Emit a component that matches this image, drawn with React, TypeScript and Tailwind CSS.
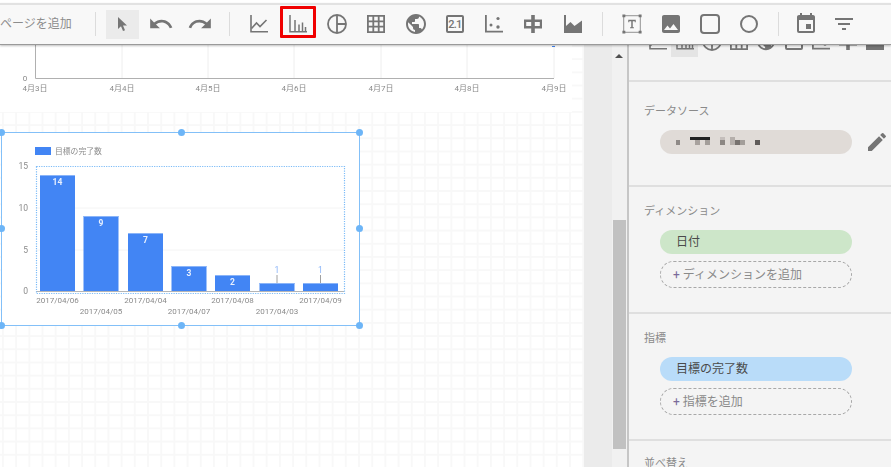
import { MdEdit, MdEvent, MdFilterList, MdImage, MdPublic, MdRedo, MdUndo } from "react-icons/md";

const GREY = "#757575";
const FONT = "font-['Roboto','Noto_Sans_CJK_JP',sans-serif]";

function CursorIcon() {
  return (
    <svg width="9" height="14" viewBox="0 0 9 14" fill={GREY}>
      <path d="M0 0v12l3-2.800 2 4.800 2-.8-2-4.600h4z" />
    </svg>
  );
}

function LineChartIcon() {
  return (
    <svg width="18" height="18" viewBox="0 0 18 18" fill="none" stroke={GREY} strokeWidth="1.600">
      <path d="M1 0v16.700h17" />
      <path d="M1.500 13.500L6.500 8l3.500 3.500 6.500-6.500" />
    </svg>
  );
}

function BarChartIcon() {
  return (
    <svg width="18" height="18" viewBox="0 0 18 18" fill="none" stroke={GREY} strokeWidth="1.500">
      <path d="M1 0v16.700h17" />
      <path d="M6 5v11M10 9.500V16M13.500 7.500V16M16.500 12v4" />
    </svg>
  );
}

function PieIcon() {
  return (
    <svg width="20" height="20" viewBox="0 0 20 20" fill="none" stroke={GREY} strokeWidth="1.800">
      <circle cx="10" cy="10" r="9" />
      <path d="M10 1v18M10 10h9" />
    </svg>
  );
}

function TableIcon() {
  return (
    <svg width="18" height="18" viewBox="0 0 18 18" fill="none" stroke={GREY} strokeWidth="1.800">
      <path d="M.9.9h16.200v16.200H.9zM6.300.9v16.200M11.700.9v16.200M.9 6.300h16.200M.9 11.700h16.200" />
    </svg>
  );
}

function ScorecardIcon() {
  return (
    <div className="flex h-[18px] w-[18px] items-center justify-center rounded-[2px] border-2 border-[#757575]">
      <span className="text-[11px] font-medium leading-none tracking-[-0.8px] text-[#757575]">2.1</span>
    </div>
  );
}

function ScatterIcon() {
  return (
    <svg width="18" height="18" viewBox="0 0 18 18" fill={GREY}>
      <path d="M0 0h1.800v15.800H18v1.700H0z" />
      <circle cx="13" cy="3.500" r="1.600" />
      <circle cx="6" cy="10" r="1.500" />
      <circle cx="13" cy="12" r="1.700" />
    </svg>
  );
}

function BulletIcon() {
  return (
    <svg width="18" height="18" viewBox="0 0 18 18" fill={GREY} fillRule="evenodd">
      <path d="M7.200 0h3.600v4.500H18v9h-7.200V18H7.200v-4.500H0v-9h7.200zM2.200 7v4h5V7zm8.600 0v4h5V7z" />
    </svg>
  );
}

function AreaIcon() {
  return (
    <svg width="18" height="18" viewBox="0 0 18 18" fill={GREY}>
      <path d="M0 0h2v11l4.500-4 4 4L18 5.500V18H0z" />
    </svg>
  );
}

function TextBoxIcon() {
  return (
    <svg width="20" height="20" viewBox="0 0 24 24" fill="none">
      <rect x="2" y="2" width="20" height="20" stroke="#a0a0a0" strokeWidth="1.400" />
      <path d="M7.500 7h9v3h-1.200V8.600h-2.400v7.200h1.400V17H9.700v-1.200h1.400V8.600H8.700V10H7.500z" fill={GREY} />
      <path d="M.5.500h3.500V4H.5zM20 .5h3.500V4H20zM.5 20h3.500v3.500H.5zM20 20h3.500v3.500H20z" fill={GREY} />
    </svg>
  );
}

function SquareIcon() {
  return (
    <svg width="20" height="20" viewBox="0 0 20 20" fill="none" stroke={GREY} strokeWidth="2">
      <rect x="1" y="1" width="18" height="18" rx="3" />
    </svg>
  );
}

function CircleIcon() {
  return (
    <svg width="18" height="18" viewBox="0 0 18 18" fill="none" stroke={GREY} strokeWidth="2">
      <circle cx="9" cy="9" r="8" />
    </svg>
  );
}

function Divider() {
  return <div className="h-[24px] w-px shrink-0 bg-[#dcdcdc]" />;
}

function ToolSlot({ children, wide }: { children: React.ReactNode; wide?: boolean }) {
  return (
    <div className={`flex h-[29px] shrink-0 items-center justify-center ${wide ? "w-[39.250px]" : "w-[39px]"}`}>
      {children}
    </div>
  );
}

function Toolbar() {
  return (
    <div className="relative z-10 mt-[3px] flex h-[42px] shrink-0 items-center border-t-2 border-b border-t-[#e2e2e2] border-b-[#9a9a9a] bg-[#f8f8f8] pb-[1px] shadow-[0_1px_2px_rgba(0,0,0,0.25)]">
      <span className="w-[95px] shrink-0 text-[12px] text-[#8d8d8d]">ページを追加</span>
      <Divider />
      <div className="ml-[6.500px] flex items-center">
        <ToolSlot>
          <div className="flex h-[29px] w-[33px] items-center justify-center bg-[#ebebeb]">
            <CursorIcon />
          </div>
        </ToolSlot>
        <ToolSlot><MdUndo size={26} color={GREY} /></ToolSlot>
        <ToolSlot><MdRedo size={26} color={GREY} /></ToolSlot>
      </div>
      <div className="ml-[9.500px]"><Divider /></div>
      <div className="ml-[9px] flex items-center">
        <ToolSlot wide><LineChartIcon /></ToolSlot>
        <ToolSlot wide>
          <div className="relative flex h-[29px] w-[36px] items-center justify-center">
            <div className="absolute left-0 top-[-3.500px] h-[31.500px] w-[36.500px] rounded-[1px] border-[3px] border-[#f00000]" />
            <BarChartIcon />
          </div>
        </ToolSlot>
        <ToolSlot wide><PieIcon /></ToolSlot>
        <ToolSlot wide><TableIcon /></ToolSlot>
        <ToolSlot wide><MdPublic size={24} color={GREY} /></ToolSlot>
        <ToolSlot wide><ScorecardIcon /></ToolSlot>
        <ToolSlot wide><ScatterIcon /></ToolSlot>
        <ToolSlot wide><BulletIcon /></ToolSlot>
        <ToolSlot wide><AreaIcon /></ToolSlot>
      </div>
      <div className="ml-[9.250px]"><Divider /></div>
      <div className="ml-[9.400px] flex items-center">
        <ToolSlot wide><TextBoxIcon /></ToolSlot>
        <ToolSlot wide><MdImage size={24} color={GREY} /></ToolSlot>
        <ToolSlot wide><SquareIcon /></ToolSlot>
        <ToolSlot wide><CircleIcon /></ToolSlot>
      </div>
      <div className="ml-[9.600px]"><Divider /></div>
      <div className="ml-[8px] flex items-center">
        <div className="flex w-[38px] justify-center"><MdEvent size={24} color={GREY} /></div>
        <div className="flex w-[38px] justify-center"><MdFilterList size={24} color={GREY} /></div>
      </div>
    </div>
  );
}

function LineChartCard() {
  const ticks = [
    { label: "4月3日", x: 35 },
    { label: "4月4日", x: 122 },
    { label: "4月5日", x: 208 },
    { label: "4月6日", x: 294 },
    { label: "4月7日", x: 381 },
    { label: "4月8日", x: 467 },
    { label: "4月9日", x: 554 },
  ];
  return (
    <div className="h-[67px] w-[572px] bg-white">
      <svg width="572" height="67" viewBox="0 0 572 67" className="blur-[0.3px]">
        {ticks.slice(1).map((t) => (
          <line key={t.x} x1={t.x} y1="0" x2={t.x} y2="33" stroke="#eeeeee" />
        ))}
        <path d="M35.500 0v33.500H554" stroke="#b0b0b0" fill="none" />
        <rect x="552" y="1" width="3" height="1" fill="#4285f4" />
        <text x="25" y="36" textAnchor="middle" fontSize="8" fill="#8a8a8a">0</text>
        {ticks.map((t) => (
          <text key={t.x} x={t.x} y="46" textAnchor="middle" fontSize="8" fill="#8a8a8a">
            {t.label}
          </text>
        ))}
      </svg>
    </div>
  );
}

const bars = [
  { value: 14, date: "2017/04/06", x: 39, y: 42 },
  { value: 9, date: "2017/04/05", x: 82.500, y: 83 },
  { value: 7, date: "2017/04/04", x: 127, y: 100 },
  { value: 3, date: "2017/04/07", x: 170.500, y: 133 },
  { value: 2, date: "2017/04/08", x: 214, y: 142 },
  { value: 1, date: "2017/04/03", x: 258.500, y: 150 },
  { value: 1, date: "2017/04/09", x: 302, y: 150 },
];

function BarChartCard() {
  const handles = [
    "-left-[4px] -top-[4px]",
    "left-[175.500px] -top-[4px]",
    "-right-[4px] -top-[4px]",
    "-left-[4px] top-[92px]",
    "-right-[4px] top-[92px]",
    "-left-[4px] -bottom-[4px]",
    "left-[175.500px] -bottom-[4px]",
    "-right-[4px] -bottom-[4px]",
  ];
  return (
    <div className="relative ml-px mt-[20px] h-[194px] w-[359px] border-[1.500px] border-[#83c0f8] bg-white">
      <svg width="356" height="191" viewBox="0 0 356 191" className="block blur-[0.3px]">
        <rect x="33" y="14" width="16" height="8" fill="#4285f4" />
        <text x="53" y="21" fontSize="7.800" fill="#8a8a8a">目標の完了数</text>
        {[
          { v: 15, y: 33 },
          { v: 10, y: 75 },
          { v: 5, y: 117 },
          { v: 0, y: 158 },
        ].map((t) => (
          <g key={t.v}>
            {t.v !== 0 && t.v !== 15 && <line x1="34" y1={t.y} x2="342" y2={t.y} stroke="#f4f4f4" />}
            <text x="26" y={t.y + 3} textAnchor="end" fontSize="8.500" fill="#8a8a8a">
              {t.v}
            </text>
          </g>
        ))}
        {bars.map((b, i) => (
          <g key={b.date}>
            <rect x={b.x - 1} y={b.y} width="35" height={158 - b.y} fill="#4285f4" />
            <rect x={b.x - 1} y={b.y} width="35" height="1" fill="#8ab4f8" />
            {b.value === 1 ? (
              <>
                <line x1={b.x + 16.500} y1="142" x2={b.x + 16.500} y2={b.y} stroke="#a0a0a0" />
                <text x={b.x + 16.500} y="140" textAnchor="middle" fontSize="8.500" fill="#8ab4f8">1</text>
              </>
            ) : (
              <text x={b.x + 16.500} y={b.y + 9.500} textAnchor="middle" fontSize="8.500" fontWeight="700" fill="#e8f0fe">
                {b.value}
              </text>
            )}
            <text x={b.x + 16.500} y={i % 2 === 0 ? 170 : 181} textAnchor="middle" fontSize="8" fill="#8a8a8a">
              {b.date}
            </text>
          </g>
        ))}
        <line x1="34" y1="158.500" x2="342" y2="158.500" stroke="#b5b5b5" strokeWidth="1.200" />
        <rect x="34.500" y="33.500" width="308" height="127" fill="none" stroke="#7dbcf7" strokeWidth="1.200" strokeDasharray="1.200 1.200" />
      </svg>
      {handles.map((h) => (
        <div key={h} className={`absolute h-[7px] w-[7px] rounded-full bg-[#6db5f7] ${h}`} />
      ))}
    </div>
  );
}

function RedactedName() {
  return (
    <svg width="90" height="16" viewBox="0 0 90 16" className="ml-[16px]">
      <rect x="0" y="6" width="4" height="5" fill="#8f8a87" />
      <rect x="14" y="3" width="20" height="3" fill="#222222" />
      <rect x="19" y="6" width="5" height="5" fill="#a8a29e" />
      <rect x="29" y="6" width="5" height="5" fill="#a39e9a" />
      <rect x="44" y="3" width="5" height="3" fill="#c4bebb" />
      <rect x="44" y="6" width="5" height="5" fill="#8c8783" />
      <rect x="54" y="3" width="5" height="8" fill="#b5afab" />
      <rect x="59" y="6" width="5" height="5" fill="#77726f" />
      <rect x="64" y="6" width="5" height="5" fill="#a39e9a" />
      <rect x="79" y="6" width="5" height="5" fill="#5f5b59" />
    </svg>
  );
}

function Section({ label, height, top, children }: { label: string; height: string; top: string; children?: React.ReactNode }) {
  return (
    <section className={`shrink-0 border-b-2 border-[#dfdfdf] pl-[15px] ${height} ${top}`}>
      <div className="text-[11px] leading-[15px] text-[#8a8a8a]">{label}</div>
      <div className="ml-[16px] mt-[11px] flex w-[192px] flex-col gap-[7px]">{children}</div>
    </section>
  );
}

function Pill({ color, text }: { color: string; text: string }) {
  return (
    <div className={`flex h-[24px] items-center rounded-full pl-[16px] text-[12px] text-[#4a4a4a] ${color}`}>
      {text}
    </div>
  );
}

function AddPill({ text }: { text: string }) {
  return (
    <div className="flex h-[27px] items-center rounded-full border border-dashed border-[#a8a8a8] pl-[12px] text-[12px] text-[#8a8a8a]">
      <span className="mr-[3px] text-[#7a6a9a]">+</span>
      {text}
    </div>
  );
}

function PanelIcon({ children, active }: { children: React.ReactNode; active?: boolean }) {
  return (
    <div className={`h-[25px] w-[27.200px] shrink-0 ${active ? "bg-[#e4e4e4]" : ""}`}>
      <div className="flex h-[18px] items-center justify-center">{children}</div>
    </div>
  );
}

function SidePanel() {
  return (
    <aside className="w-[264px] shrink-0 overflow-hidden border-l-2 border-[#c6c6c6] bg-[#f4f4f4]">
      <div className="flex h-[37px] shrink-0 flex-col border-b-2 border-[#dfdfdf]">
        <div className="-mt-[13px] ml-[15px] flex">
          <PanelIcon><LineChartIcon /></PanelIcon>
          <PanelIcon active><BarChartIcon /></PanelIcon>
          <PanelIcon><PieIcon /></PanelIcon>
          <PanelIcon><TableIcon /></PanelIcon>
          <PanelIcon><MdPublic size={22} color={GREY} /></PanelIcon>
          <PanelIcon><ScorecardIcon /></PanelIcon>
          <PanelIcon><ScatterIcon /></PanelIcon>
          <PanelIcon><BulletIcon /></PanelIcon>
          <PanelIcon><AreaIcon /></PanelIcon>
        </div>
      </div>
      <Section label="データソース" height="h-[105px]" top="pt-[22px]">
        <div className="relative flex h-[24px] items-center rounded-full bg-[#e0dbd7]">
          <RedactedName />
          <MdEdit size={24} color={GREY} className="absolute -right-[37px] top-0" />
        </div>
      </Section>
      <Section label="ディメンション" height="h-[127px]" top="pt-[17px]">
        <Pill color="bg-[#cde6c9]" text="日付" />
        <AddPill text="ディメンションを追加" />
      </Section>
      <Section label="指標" height="h-[127px]" top="pt-[17px]">
        <Pill color="bg-[#b9dcf9]" text="目標の完了数" />
        <AddPill text="指標を追加" />
      </Section>
      <div className="pl-[15px] pt-[15px] text-[11px] leading-[15px] text-[#8a8a8a]">並べ替え</div>
    </aside>
  );
}

export default function App() {
  return (
    <div className={`flex h-[467px] w-[891px] flex-col overflow-hidden bg-white ${FONT}`}>
      <Toolbar />
      <div className="flex min-h-0 flex-1">
        <main className="w-[584px] shrink-0 bg-white bg-[linear-gradient(#f8f8f8_1.500px,transparent_1.500px),linear-gradient(90deg,#f8f8f8_1.500px,transparent_1.500px)] bg-[size:13.200px_13.200px] bg-[position:2px_0]">
          <LineChartCard />
          <BarChartCard />
        </main>
        <div className="w-[28px] shrink-0 bg-[#ebebeb]" />
        <div className="relative w-[15px] shrink-0 bg-[#f1f1f1]">
          <div className="absolute left-[3px] top-[9px] h-0 w-0 border-x-[4px] border-b-[4px] border-x-transparent border-b-[#505050]" />
          <div className="absolute left-[1px] top-[175px] h-[229px] w-[13px] bg-[#c1c1c1]" />
        </div>
        <SidePanel />
      </div>
    </div>
  );
}
